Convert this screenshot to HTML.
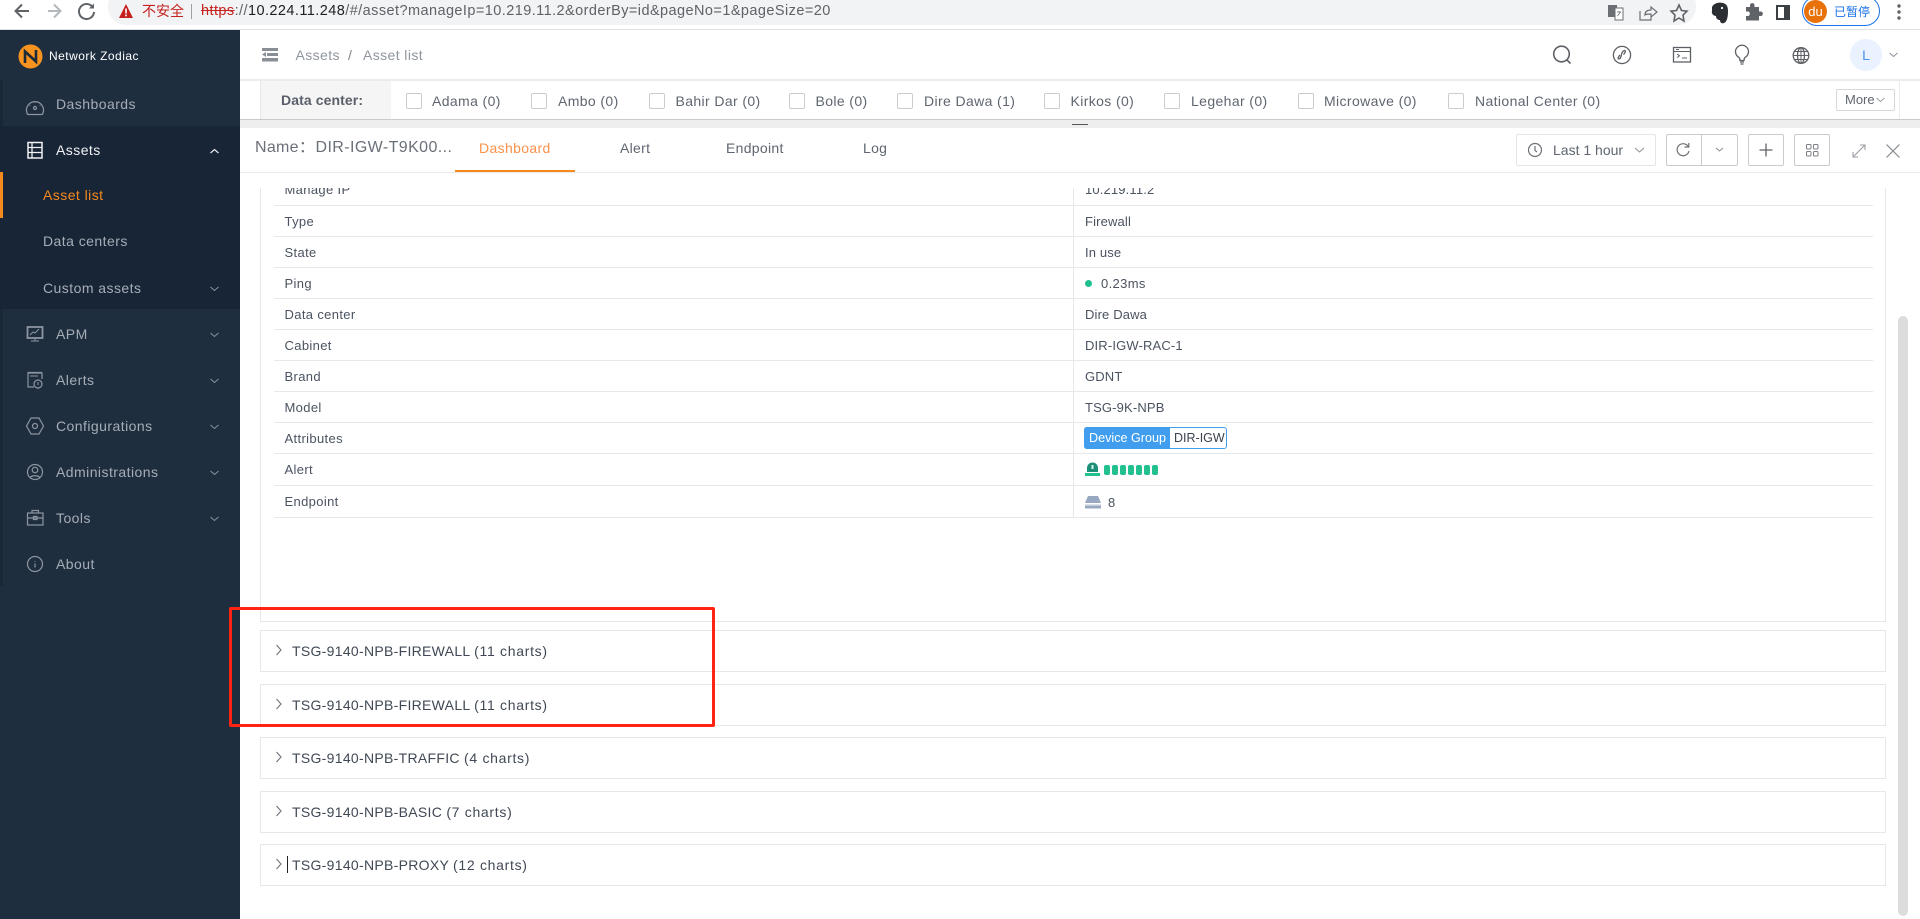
<!DOCTYPE html>
<html lang="en"><head><meta charset="utf-8"><title>Asset list</title>
<style>
*{box-sizing:border-box}
html,body{margin:0;padding:0;width:1920px;height:919px;overflow:hidden;background:#fff;font-family:"Liberation Sans","Noto Sans CJK SC",sans-serif;color:#4b5563}
.a{position:absolute}
.t{position:absolute;white-space:nowrap;line-height:20px;height:20px}
svg{position:absolute;overflow:visible}
.s{font-size:14px;letter-spacing:.45px;color:#a6adb6}
.f{font-size:14px;letter-spacing:.38px;color:#5f6670}
.cb{position:absolute;top:93px;width:16px;height:16px;border:1px solid #c9ccd1;border-radius:2px;background:#fff}
.r{position:absolute;left:274px;width:1599px;height:1px;background:#e6e8ec}
.l{font-size:13px;letter-spacing:.35px;color:#4b5361}
.v{letter-spacing:.15px}
.p{position:absolute;left:260px;width:1626px;height:42px;border:1px solid #e6e7eb;background:#fff}
.pt{font-size:14px;letter-spacing:.3px;color:#3f4854;left:292px}
.pt span{letter-spacing:.7px}
.btn{position:absolute;top:134px;height:32px;border:1px solid #c9cbcf;border-radius:2px;background:#fff}
</style></head><body>

<!-- Browser bar -->
<div class="a" style="left:0;top:0;width:1920px;height:30px;background:#fff;border-bottom:1px solid #dfe1e5"></div>
<div class="a" style="left:108px;top:-12px;width:1588px;height:37px;border-radius:18px;background:#f1f3f4"></div>
<svg style="left:0;top:0" width="110" height="25" fill="none" stroke-width="2">
<path d="M29 11H16M22 4.500L15.500 11 22 17.500" stroke="#5f6368"/>
<path d="M48 11H60M54 4.500L60.500 11 54 17.500" stroke="#b4b7bb"/>
<path d="M92.500 7A7.500 7.500 0 1 0 94 12" stroke="#5f6368"/><path d="M94 3.500V8.500H89z" fill="#5f6368"/>
</svg>
<svg style="left:118px;top:4px" width="16" height="14"><path d="M8 0L15 14H1z" fill="#c5221f"/><rect x="7.200" y="4.500" width="1.600" height="5" fill="#fff"/><rect x="7.200" y="10.500" width="1.600" height="1.800" fill="#fff"/></svg>
<div class="t" style="left:142px;top:1px;font-size:14px;color:#c5221f">不安全</div>
<div class="a" style="left:191px;top:4px;width:1px;height:15px;background:#9aa0a6"></div>
<div class="t" style="left:201px;top:1px;font-size:14.500px;letter-spacing:.43px;color:#5f6368"><span style="color:#c5221f;text-decoration:line-through">https</span>://<span style="color:#202124">10.224.11.248</span>/#/asset?manageIp=10.219.11.2&amp;orderBy=id&amp;pageNo=1&amp;pageSize=20</div>
<svg style="left:1607px;top:3px" width="90" height="20" fill="none">
<rect x="1" y="2" width="9" height="12" fill="#6b6f74"/><rect x="8" y="5" width="8" height="12" fill="#fff" stroke="#6b6f74"/><path d="M10 9h4M12 8v1M10.500 13l3-4" stroke="#6b6f74" stroke-width=".8"/>
<path d="M33 8v9h11v-4M38 12c0-4 3-5 6-5V4l6 5-6 5v-3c-3 0-5 0-6 1z" stroke="#6b6f74" stroke-width="1.200"/>
<path d="M72 2l2.500 5.500 5.500.6-4 4 1 5.900-5-3-5 3 1-5.900-4-4 5.500-.6z" stroke="#5f6368" stroke-width="1.600"/>
</svg>
<svg style="left:1710px;top:1px" width="90" height="24">
<path d="M2 6c2-4 7-5 11-4 4 1 5 4 5 8 0 6-1 11-4 12-3 1-4-1-4-3-2 0-4-1-4-4-2 0-5-2-4-5z" fill="#2b2f33"/><circle cx="12" cy="7" r="1.100" fill="#fff"/>
<path d="M36 7h4V5a2.300 2.300 0 0 1 4.500 0v2h4.500v4.500h2a2.300 2.300 0 0 1 0 4.500h-2v4.500H36v-4.500h2a2.300 2.300 0 0 0 0-4.500h-2z" transform="translate(0 -1)" fill="#5f6368"/>
<path fill-rule="evenodd" d="M66 4h14v15H66zM68 6v11h6V6z" fill="#3c4043"/>
</svg>
<div class="a" style="left:1802px;top:-4px;width:78px;height:30px;border:1px solid #1a73e8;border-radius:15px;background:#fff"></div>
<div class="a" style="left:1804px;top:0;width:23px;height:23px;border-radius:50%;background:#e8710a;color:#fff;font-size:13px;line-height:23px;text-align:center">du</div>
<div class="t" style="left:1834px;top:2px;font-size:12px;color:#1a73e8">已暂停</div>
<svg style="left:1896px;top:3px" width="6" height="18" fill="#5f6368"><circle cx="3" cy="3" r="1.700"/><circle cx="3" cy="9" r="1.700"/><circle cx="3" cy="15" r="1.700"/></svg>

<!-- Sidebar -->
<div class="a" style="left:0;top:30px;width:240px;height:889px;background:#1f2e3f"></div>
<div class="a" style="left:0;top:80px;width:3px;height:506px;background:#1a2736"></div>
<div class="a" style="left:0;top:126px;width:240px;height:183px;background:#182537"></div>
<div class="a" style="left:0;top:172px;width:3px;height:46px;background:#f68a1e"></div>
<svg style="left:18px;top:44px" width="25" height="25"><circle cx="12.500" cy="12.500" r="12" fill="#f7931e"/><path d="M7 19V7.500l11 10V6" fill="none" stroke="#1d2a38" stroke-width="2.600"/></svg>
<div class="t" style="left:49px;top:46px;font-size:12px;letter-spacing:.47px;color:#fff">Network Zodiac</div>

<div class="t s" style="left:56px;top:94px">Dashboards</div>
<div class="t s" style="left:56px;top:140px;color:#f0f2f4">Assets</div>
<div class="t s" style="left:43px;top:185px;color:#f68a1e">Asset list</div>
<div class="t s" style="left:43px;top:231px">Data centers</div>
<div class="t s" style="left:43px;top:278px">Custom assets</div>
<div class="t s" style="left:56px;top:324px">APM</div>
<div class="t s" style="left:56px;top:370px">Alerts</div>
<div class="t s" style="left:56px;top:416px">Configurations</div>
<div class="t s" style="left:56px;top:462px">Administrations</div>
<div class="t s" style="left:56px;top:508px">Tools</div>
<div class="t s" style="left:56px;top:554px">About</div>

<svg style="left:0;top:0" width="240" height="600" fill="none" stroke="#8c95a0" stroke-width="1.200">
<path d="M27 113a8.500 8.500 0 1 1 16 0q0 1.500-1.500 1.500h-13q-1.500 0-1.500-1.500z"/><circle cx="35" cy="108" r="1.500"/><path d="M35 102v.5M30 105v.5M40 105v.5" stroke-width="1.500"/>
<rect x="28" y="142.500" width="14" height="15.500" stroke="#f0f2f4" stroke-width="1.500"/><path d="M28 147.500h14M28 152.500h14M32 142.500v15.500" stroke="#f0f2f4" stroke-width="1.300"/>
<rect x="27.500" y="327" width="15" height="11" stroke-width="1.800"/><path d="M30 335l3-3 2 1 4-4M35 338v3M31 341h8" stroke-width="1"/>
<path d="M28 379v-6h14v6M28 376v-3.500h14M28 373v14h6"/><circle cx="38" cy="384" r="4"/><path d="M38 382v3M30 376h8" stroke-width="1"/>
<path d="M31 418h8l4.500 8-4.500 8h-8l-4.500-8z"/><circle cx="35" cy="426" r="2.500"/>
<circle cx="35" cy="472" r="7.500"/><circle cx="35" cy="470" r="2.800"/><path d="M30 478c1-3 9-3 10 0"/>
<rect x="27.500" y="513" width="15.500" height="12"/><path d="M32 513v-2.500h6.500v2.500M27.500 518h15.500"/><rect x="33.500" y="516.500" width="3.500" height="3"/>
<circle cx="35" cy="564" r="7.500"/><path d="M35 561v.8M35 563.500v4"/>
<g stroke-width="1" stroke="#8a929c"><path d="M210.500 333l4 3.500 4-3.500M210.500 379l4 3.500 4-3.500M210.500 425l4 3.500 4-3.500M210.500 471l4 3.500 4-3.500M210.500 517l4 3.500 4-3.500M210.500 287l4 3.500 4-3.500"/></g>
<path d="M210.500 153l4-3.500 4 3.500" stroke="#e8eaed"/>
</svg>

<!-- Header -->
<div class="a" style="left:240px;top:79px;width:1680px;height:2px;background:#e9ebee"></div>
<svg style="left:262px;top:48px" width="17" height="14" fill="#8a8f96"><rect x="0" y="0" width="16" height="3"/><rect x="5" y="5" width="11" height="3"/><path d="M0 6.500l4-2.500v5z"/><rect x="0" y="10" width="16" height="3.500"/></svg>
<div class="t" style="left:295.500px;top:45px;font-size:14px;letter-spacing:.4px;color:#8f959c">Assets</div>
<div class="t" style="left:348px;top:45px;font-size:14px;color:#7d838a">/</div>
<div class="t" style="left:363px;top:45px;font-size:14px;letter-spacing:.4px;color:#8f959c">Asset list</div>
<svg style="left:1550px;top:42px" width="270" height="28" fill="none" stroke="#5d6166" stroke-width="1.300">
<circle cx="11.500" cy="12" r="7.800" stroke-width="1.600"/><path d="M17 18l3.500 3.500" stroke-width="1.600"/>
<circle cx="72" cy="13" r="8.600"/><path d="M75 8.500c-2 0-3 1.500-3.500 4s-1 4.500-3 4.500M75 8.500c1 .8-.5 3-1.500 4M68.500 17c-1-.8.500-3 1.500-4"/>
<rect x="123.500" y="5.500" width="17" height="14.500"/><path d="M123.500 9.500h17M126 7.500h3M127 12l2.500 1.800-2.500 1.800M132 16h5" stroke-width="1"/>
<path d="M189 15.500a6.500 6.500 0 1 1 6 0c-.8.8-1 2-1 3h-4c0-1-.2-2.200-1-3zM190 20h4M190.500 22h3" />
<circle cx="251" cy="13.500" r="7.800"/><ellipse cx="251" cy="13.500" rx="3.500" ry="7.800"/><path d="M243.200 13.500h15.600M244.500 9.500h13M244.500 17.500h13M251 5.700v15.600" stroke-width="1"/>
</svg>
<div class="a" style="left:1850px;top:39px;width:32px;height:32px;border-radius:50%;background:#e9f2fe;color:#4b93f0;font-size:14px;line-height:32px;text-align:center">L</div>
<svg style="left:1889px;top:52px" width="10" height="7" fill="none" stroke="#8a8f96"><path d="M.5 1l4 3.500 4-3.500"/></svg>

<!-- Filter row -->
<div class="a" style="left:260px;top:81px;width:131px;height:38px;background:#f5f5f6;border-left:1px solid #e6e7e9"></div>
<div class="t" style="left:281px;top:90px;font-size:14px;font-weight:bold;letter-spacing:.1px;color:#5a6069">Data center:</div>
<div class="cb" style="left:406px"></div><div class="t f" style="left:432px;top:91px">Adama (0)</div>
<div class="cb" style="left:531px"></div><div class="t f" style="left:558px;top:91px">Ambo (0)</div>
<div class="cb" style="left:649px"></div><div class="t f" style="left:675.500px;top:91px">Bahir Dar (0)</div>
<div class="cb" style="left:789px"></div><div class="t f" style="left:815.500px;top:91px">Bole (0)</div>
<div class="cb" style="left:897px"></div><div class="t f" style="left:924px;top:91px">Dire Dawa (1)</div>
<div class="cb" style="left:1044px"></div><div class="t f" style="left:1070.500px;top:91px">Kirkos (0)</div>
<div class="cb" style="left:1164px"></div><div class="t f" style="left:1191px;top:91px">Legehar (0)</div>
<div class="cb" style="left:1298px"></div><div class="t f" style="left:1324px;top:91px">Microwave (0)</div>
<div class="cb" style="left:1448px"></div><div class="t f" style="left:1475px;top:91px">National Center (0)</div>
<div class="a" style="left:1836px;top:89px;width:59px;height:22px;border:1px solid #d6d8db;border-radius:2px"></div>
<div class="t" style="left:1845px;top:90px;font-size:13px;color:#5f6670">More</div>
<svg style="left:1876px;top:97px" width="10" height="7" fill="none" stroke="#9a9ea4"><path d="M.5 1l4 3.500 4-3.500"/></svg>
<div class="a" style="left:1899px;top:80px;width:1px;height:39px;background:#ececee"></div>
<div class="a" style="left:240px;top:119px;width:1680px;height:1px;background:#c8cacd"></div>
<div class="a" style="left:240px;top:120px;width:1680px;height:8px;background:#eeeeef"></div>
<div class="a" style="left:1072px;top:124px;width:16px;height:1px;background:#555a60"></div>

<!-- Tabs header -->
<div class="t" style="left:255px;top:138px;font-size:16px;letter-spacing:.3px;color:#6a7078">Name：</div>
<div class="t" style="left:315.500px;top:138px;font-size:16px;letter-spacing:.4px;color:#6a7078">DIR-IGW-T9K00...</div>
<div class="t" style="left:479px;top:138px;font-size:14px;letter-spacing:.35px;color:#f8914a">Dashboard</div>
<div class="t" style="left:620px;top:138px;font-size:14px;letter-spacing:.3px;color:#5f6670">Alert</div>
<div class="t" style="left:726px;top:138px;font-size:14px;letter-spacing:.3px;color:#5f6670">Endpoint</div>
<div class="t" style="left:863px;top:138px;font-size:14px;letter-spacing:.3px;color:#5f6670">Log</div>
<div class="a" style="left:240px;top:172px;width:1680px;height:1px;background:#e8eaed"></div>
<div class="a" style="left:455px;top:170px;width:120px;height:2px;background:#f68a1e"></div>

<div class="btn" style="left:1516px;width:140px;border-color:#e4e5e7"></div>
<svg style="left:1527px;top:142px" width="16" height="16" fill="none" stroke="#6e7277" stroke-width="1.200"><circle cx="8" cy="8" r="6.500"/><path d="M8 4v4.500l2 1.500"/></svg>
<div class="t" style="left:1553px;top:140px;font-size:14px;letter-spacing:0;color:#5f6670">Last 1 hour</div>
<svg style="left:1634px;top:147px" width="12" height="8" fill="none" stroke="#8a8f96"><path d="M1 1l4.500 4 4.500-4"/></svg>
<div class="btn" style="left:1666px;width:72px"></div>
<div class="a" style="left:1701px;top:134px;width:1px;height:32px;background:#c9cbcf"></div>
<svg style="left:1675px;top:142px" width="16" height="16" fill="none" stroke="#6e7277" stroke-width="1.200"><path d="M13.500 5A6 6 0 1 0 14 9"/><path d="M9.500 5h4.300V1" /></svg>
<svg style="left:1715px;top:147px" width="10" height="7" fill="none" stroke="#8a8f96"><path d="M1 1l3.500 3 3.500-3"/></svg>
<div class="btn" style="left:1748px;width:36px"></div>
<svg style="left:1759px;top:143px" width="14" height="14" fill="none" stroke="#5d6166" stroke-width="1.300"><path d="M7 .5v13M.5 7h13"/></svg>
<div class="btn" style="left:1794px;width:36px"></div>
<svg style="left:1806px;top:144px" width="13" height="13" fill="none" stroke="#7b7f85"><rect x=".5" y=".5" width="4.500" height="4.500" rx="1"/><rect x="7.500" y=".5" width="4.500" height="4.500" rx="1"/><rect x=".5" y="7.500" width="4.500" height="4.500" rx="1"/><rect x="7.500" y="7.500" width="4.500" height="4.500" rx="1"/></svg>
<svg style="left:1852px;top:144px" width="48" height="15" fill="none" stroke="#9a9ea4" stroke-width="1.100"><path d="M1 13L13 1M8 1h5v5M1 8v5h5"/><path d="M34.500 .5l13 13M47.500 .5l-13 13" stroke="#85898f" stroke-width="1.200"/></svg>

<!-- Main panel -->
<div class="a" style="left:260px;top:188px;width:1626px;height:434px;border:1px solid #e6e7eb;border-top:0;background:#fff;overflow:hidden"></div>
<div class="a" style="left:1073px;top:188px;width:1px;height:330px;background:#e6e8ec"></div>

<div class="a" style="left:0;top:188px;width:1890px;height:14px;overflow:hidden">
  <div class="t l" style="left:284.500px;top:-8px">Manage IP</div>
  <div class="t l v" style="left:1085px;top:-8px">10.219.11.2</div>
</div>
<div class="r" style="top:205px"></div><div class="r" style="top:236px"></div><div class="r" style="top:267px"></div><div class="r" style="top:298px"></div><div class="r" style="top:329px"></div><div class="r" style="top:360px"></div><div class="r" style="top:391px"></div><div class="r" style="top:422px"></div><div class="r" style="top:453px"></div><div class="r" style="top:485px"></div><div class="r" style="top:517px"></div>

<div class="t l" style="left:284.500px;top:212px">Type</div><div class="t l v" style="left:1085px;top:212px">Firewall</div>
<div class="t l" style="left:284.500px;top:243px">State</div><div class="t l v" style="left:1085px;top:243px">In use</div>
<div class="t l" style="left:284.500px;top:274px">Ping</div>
<div class="a" style="left:1084.500px;top:279.500px;width:7px;height:7px;border-radius:50%;background:#1fc08e"></div>
<div class="t l" style="left:1101px;top:274px">0.23ms</div>
<div class="t l" style="left:284.500px;top:305px">Data center</div><div class="t l v" style="left:1085px;top:305px">Dire Dawa</div>
<div class="t l" style="left:284.500px;top:336px">Cabinet</div><div class="t l v" style="left:1085px;top:336px">DIR-IGW-RAC-1</div>
<div class="t l" style="left:284.500px;top:367px">Brand</div><div class="t l v" style="left:1085px;top:367px">GDNT</div>
<div class="t l" style="left:284.500px;top:398px">Model</div><div class="t l v" style="left:1085px;top:398px">TSG-9K-NPB</div>
<div class="t l" style="left:284.500px;top:429px">Attributes</div>
<div class="a" style="left:1084px;top:427px;width:143px;height:22px;border:1px solid #419eee;border-radius:3px;background:#fff"></div>
<div class="a" style="left:1084px;top:427px;width:86px;height:22px;border-radius:3px 0 0 3px;background:#419eee"></div>
<div class="t l" style="left:1089px;top:428px;color:#fff;font-size:12.600px;letter-spacing:0">Device Group</div>
<div class="t l" style="left:1174px;top:428px;font-size:12.500px;letter-spacing:0;color:#3a4250">DIR-IGW</div>
<div class="t l" style="left:284.500px;top:460px">Alert</div>
<svg style="left:1084px;top:461px" width="62" height="16"><path d="M3 11V7a5.500 5.500 0 0 1 11 0v4z" fill="#1d8f78"/><rect x="1" y="12" width="15" height="3" fill="#22c08f"/><rect x="7.500" y="4" width="2" height="4" fill="#d8f4ea"/>
<g fill="#22c08f"><rect x="20" y="4" width="6" height="10" rx="2"/><rect x="28" y="4" width="6" height="10" rx="2"/><rect x="36" y="4" width="6" height="10" rx="2"/><rect x="44" y="4" width="6" height="10" rx="2"/><rect x="52" y="4" width="6" height="10" rx="2"/><rect x="60" y="4" width="6" height="10" rx="2"/><rect x="68" y="4" width="6" height="10" rx="2"/></g></svg>
<div class="t l" style="left:284.500px;top:492px">Endpoint</div>
<svg style="left:1085px;top:495px" width="16" height="14"><path d="M3 1h10l3 7H0z" fill="#97a8c0"/><rect x="0" y="9" width="16" height="1.300" fill="#dfe4ec"/><rect x="0" y="10.500" width="16" height="3" fill="#97a8c0"/></svg>
<div class="t l" style="left:1108px;top:493px">8</div>

<!-- Collapsible panels -->
<div class="p" style="top:630px"></div><div class="t pt" style="top:641px">TSG-9140-NPB-FIREWALL <span>(11 charts)</span></div>
<div class="p" style="top:684px"></div><div class="t pt" style="top:695px">TSG-9140-NPB-FIREWALL <span>(11 charts)</span></div>
<div class="p" style="top:737px"></div><div class="t pt" style="top:748px">TSG-9140-NPB-TRAFFIC <span>(4 charts)</span></div>
<div class="p" style="top:791px"></div><div class="t pt" style="top:802px">TSG-9140-NPB-BASIC <span>(7 charts)</span></div>
<div class="p" style="top:844px"></div><div class="t pt" style="top:855px">TSG-9140-NPB-PROXY <span>(12 charts)</span></div>
<svg style="left:275px;top:640px" width="8" height="230" fill="none" stroke="#6e7379" stroke-width="1.100"><path d="M1.500 5l4.500 5-4.500 5M1.500 59l4.500 5-4.500 5M1.500 112l4.500 5-4.500 5M1.500 166l4.500 5-4.500 5M1.500 219l4.500 5-4.500 5"/></svg>
<div class="a" style="left:287px;top:856px;width:1px;height:17px;background:#222"></div>

<!-- Scrollbar -->
<div class="a" style="left:1898px;top:316px;width:10px;height:600px;border-radius:5px;background:#dcdcdd"></div>

<!-- Red annotation -->
<div class="a" style="left:229px;top:607px;width:486px;height:120px;border:3px solid #ff2313;border-radius:2px"></div>
</body></html>
